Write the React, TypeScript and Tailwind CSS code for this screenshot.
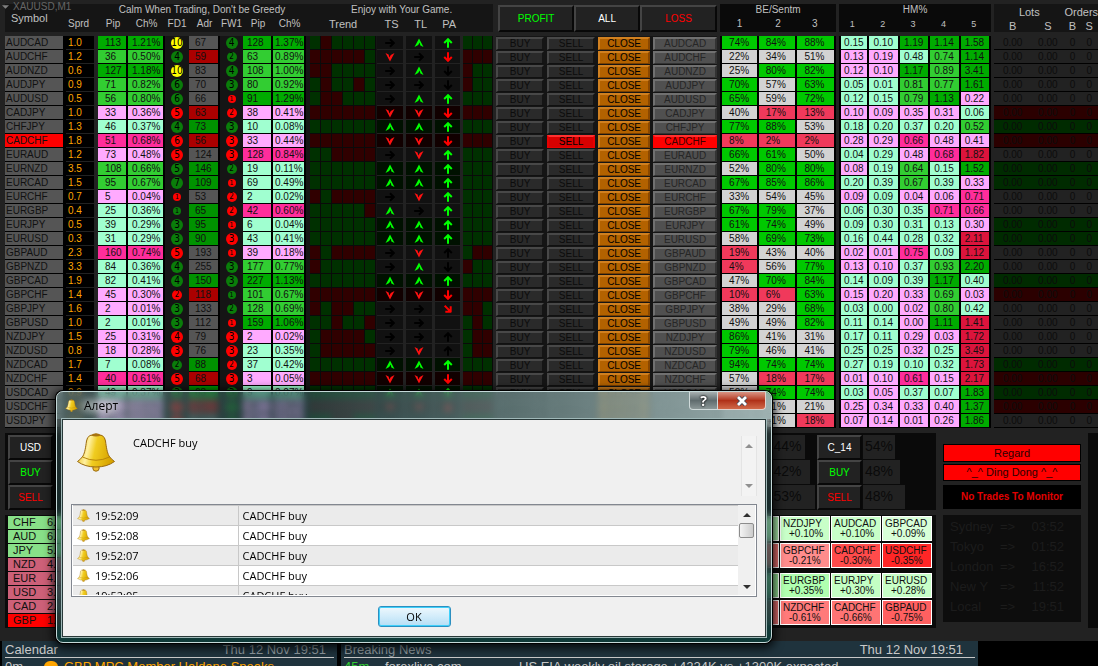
import React from "react";

type Tone = "a" | "b" | "c" | "p" | "h" | "r";

const tones: Record<string, string> = {
  a: "bg-[#00ab00]",
  b: "bg-[#32cd32]",
  c: "bg-[#a0ffd0]",
  p: "bg-[#ffaaff]",
  h: "bg-[#ff2d9b]",
  r: "bg-[#dc143c]",
};

const adrTones: Record<string, string> = {
  n: "bg-[#555555]",
  r: "bg-[#ab0000]",
  g: "bg-[#009300]",
};

const ballTones: Record<string, string> = {
  y: "bg-[#ffff00]",
  g: "bg-[#0a7d0a]",
  r: "bg-[#ff0000]",
};

// symbol | spread | pip ch tone | fd1 | adr | fw1 | pip ch tone | trend | ts tl pa | last three
const pairs = [
  "AUDCAD|1.0|113 1.21 a|10 y|67 n|4 g|128 1.37 a|GRGGGG|nuU|GGG",
  "AUDCHF|1.2|36 0.50 b|4 g|59 r|2 g|63 0.89 b|RRRRRG|dnD|RRR",
  "AUDNZD|0.6|127 1.18 a|10 y|83 n|4 g|108 1.00 b|RRGGGG|nux|RGG",
  "AUDJPY|0.9|71 0.82 b|6 g|70 n|3 g|80 0.92 b|GRGGRG|nnx|RGG",
  "AUDUSD|0.5|56 0.80 b|6 g|66 n|1 r|91 1.29 a|GRRGGG|nuU|GGG",
  "CADJPY|1.0|33 0.36 p|5 r|63 r|2 r|38 0.41 p|RRRRRR|ddD|RRR",
  "CHFJPY|1.3|46 0.37 c|4 g|73 g|3 g|10 0.08 c|GGGGGG|uuU|GGG",
  "CADCHF|1.8|51 0.68 h|6 r|56 r|3 r|33 0.44 p|RRRRRR|ddD|RRR",
  "EURAUD|1.2|73 0.48 p|5 r|124 n|3 r|128 0.84 h|GGRRRR|ndU|GGG",
  "EURNZD|3.5|108 0.66 b|5 g|146 g|2 g|19 0.11 c|GGGGGG|uuU|GGG",
  "EURCAD|1.5|95 0.67 b|7 g|109 g|1 r|69 0.49 c|GGGGGG|uuU|GGG",
  "EURCHF|0.7|5 0.04 p|1 r|53 n|2 r|2 0.02 c|RGRRRR|ndU|GGG",
  "EURGBP|0.4|25 0.36 c|1 g|65 g|2 r|42 0.60 h|GGGGGR|unU|GGG",
  "EURJPY|0.5|39 0.29 c|3 g|95 g|1 r|6 0.04 c|GGGGGG|uuU|GGG",
  "EURUSD|0.3|31 0.29 c|3 g|90 g|3 r|43 0.41 c|GGGGGG|uuU|GGG",
  "GBPAUD|2.3|160 0.74 h|5 r|193 n|1 r|39 0.18 p|RGRRRR|ndw|GRR",
  "GBPNZD|3.3|84 0.36 c|4 g|255 n|3 g|177 0.77 b|RGGGGG|nux|RGG",
  "GBPCAD|1.9|82 0.41 c|4 g|150 g|3 g|227 1.13 a|GGGGGG|uuU|GGG",
  "GBPCHF|1.4|45 0.30 p|2 r|118 r|1 g|101 0.67 b|RRRRRR|ddD|RRR",
  "GBPJPY|1.6|2 0.01 p|3 g|133 n|2 g|128 0.69 b|RGRRGG|nns|RRG",
  "GBPUSD|1.0|2 0.01 c|3 g|112 n|1 r|159 1.06 a|GGRGGR|nn-|GRG",
  "NZDJPY|1.5|25 0.31 p|4 r|79 n|3 r|2 0.02 p|GRRRRG|nnw|GRR",
  "NZDUSD|0.8|18 0.28 p|3 r|76 n|3 r|23 0.35 c|GRRRRR|ndw|GRR",
  "NZDCAD|1.7|7 0.08 c|2 g|88 g|2 r|37 0.42 c|GGGGGG|uuU|GGG",
  "NZDCHF|1.4|40 0.61 h|5 r|68 r|3 r|3 0.05 p|RRRRRR|ddD|RRR",
  "USDCAD|0.9|49 0.37 c|3 g|63 g|3 g|9 0.07 c|GGGGGG|uuU|GGG",
  "USDCHF|1.0|41 0.41 p|4 r|61 r|3 g|28 0.28 p|RRRRRR|ddD|RRR",
  "USDJPY|0.6|26 0.21 p|3 r|60 n|2 g|18 0.15 p|GGRRGG|nnw|GGG",
].map((line) => {
  const [symbol, spread, day, fd, adr, fw, week, trend, marks, last] = line.split("|");
  return {
    symbol,
    spread,
    day: day.split(" "),
    fd: fd.split(" "),
    adr: adr.split(" "),
    fw: fw.split(" "),
    week: week.split(" "),
    trend: trend.split(""),
    marks: marks.split(""),
    last: last.split(""),
  };
});

const sentiment = [
  [74, 84, 88], [22, 34, 51], [25, 80, 82], [70, 57, 63], [65, 59, 72], [40, 17, 13], [77, 88, 53],
  [8, 2, 2], [66, 61, 50], [52, 80, 80], [67, 85, 86], [33, 54, 45], [67, 79, 37], [61, 74, 49],
  [58, 69, 73], [19, 43, 40], [4, 56, 77], [47, 70, 84], [10, 6, 63], [38, 29, 68], [49, 49, 82],
  [86, 41, 31], [79, 46, 41], [94, 74, 74], [57, 18, 17], [52, 74, 74], [31, 31, 21], [41, 41, 18],
];

const heatmap = [
  "c0.15 c0.10 a1.19 a1.14 a1.58",
  "p0.13 p0.19 c0.48 b0.74 a1.14",
  "p0.12 p0.10 a1.17 b0.89 a3.41",
  "c0.05 c0.01 b0.81 b0.77 a1.61",
  "c0.12 c0.15 b0.79 a1.13 p0.22",
  "p0.10 p0.09 p0.35 p0.31 c0.06",
  "c0.18 c0.20 c0.37 c0.20 b0.52",
  "p0.28 p0.29 h0.66 p0.48 p0.41",
  "c0.04 c0.29 p0.48 h0.68 r1.82",
  "p0.08 c0.19 b0.64 c0.15 a1.52",
  "c0.20 c0.39 b0.67 c0.39 p0.33",
  "p0.09 c0.09 p0.04 p0.06 h0.71",
  "c0.06 c0.30 c0.35 h0.71 h0.66",
  "c0.09 c0.30 c0.31 c0.13 p0.30",
  "c0.16 c0.44 c0.28 c0.32 r2.11",
  "p0.02 p0.01 h0.75 c0.09 r1.12",
  "p0.13 p0.10 c0.37 b0.93 a2.20",
  "c0.14 c0.09 c0.39 a1.17 c0.40",
  "p0.15 p0.20 p0.33 b0.69 p0.03",
  "c0.03 c0.00 p0.02 b0.80 c0.42",
  "c0.11 c0.14 p0.00 a1.11 r1.41",
  "c0.17 c0.11 p0.29 p0.03 r1.72",
  "c0.25 c0.25 p0.32 c0.25 r3.49",
  "c0.27 c0.19 c0.10 c0.32 r1.73",
  "p0.01 p0.10 h0.61 p0.15 r2.17",
  "c0.03 p0.05 c0.37 c0.07 a1.83",
  "p0.25 p0.34 p0.33 p0.40 a1.37",
  "p0.07 p0.14 p0.01 p0.26 a1.86",
].map((line) => line.split(" "));

const strengths = [
  ["CHF", "6.", "bg-[#88e088]"],
  ["AUD", "6.", "bg-[#88e088]"],
  ["JPY", "5.", "bg-[#88e088]"],
  ["NZD", "4.", "bg-[#cd6078]"],
  ["EUR", "4.", "bg-[#cd6078]"],
  ["USD", "3.", "bg-[#cd6078]"],
  ["CAD", "2.", "bg-[#cd6078]"],
  ["GBP", "1.", "bg-[#ff0000]"],
];

const movers = [
  [
    ["", "", "bg-[#a8e8a8]"],
    ["NZDJPY", "+0.10%", "bg-[#c8ffc8]"],
    ["AUDCAD", "+0.10%", "bg-[#c8ffc8]"],
    ["GBPCAD", "+0.09%", "bg-[#d8ffd8]"],
    ["", "", "bg-[#e06c6c]"],
    ["GBPCHF", "-0.21%", "bg-[#ff8c8c]"],
    ["CADCHF", "-0.30%", "bg-[#ff4b4b]"],
    ["USDCHF", "-0.35%", "bg-[#ff2626]"],
  ],
  [
    ["", "", "bg-[#90d890]"],
    ["EURGBP", "+0.35%", "bg-[#b0ffb0]"],
    ["EURJPY", "+0.30%", "bg-[#c4ffc4]"],
    ["EURUSD", "+0.28%", "bg-[#c8ffc8]"],
    ["", "", "bg-[#e06c6c]"],
    ["NZDCHF", "-0.61%", "bg-[#ff7a7a]"],
    ["CADCHF", "-0.66%", "bg-[#ff7474]"],
    ["GBPAUD", "-0.75%", "bg-[#ff6060]"],
  ],
];

const clocks = [
  ["Sydney", "03:52"],
  ["Tokyo", "01:52"],
  ["London", "16:52"],
  ["New Y", "11:52"],
  ["Local", "19:51"],
];

const alerts = ["19:52:09", "19:52:08", "19:52:07", "19:52:06", "19:52:05"];

// rows where every signal agrees get a tinted background
const rowSignal = (marks: string[]) => {
  const key = marks.join("");
  return key === "uuU" ? "up" : key === "ddD" ? "down" : "flat";
};

const markTones = { up: "bg-[#001100]", down: "bg-[#110000]", flat: "bg-[#111111]" };
const lotTones = { up: "bg-[#002b00]", down: "bg-[#2b0000]", flat: "bg-[#222222]" };

const Mark = ({ kind }: { kind: string }) => {
  if (kind === "-") return null;
  if (kind === "u" || kind === "d") {
    return (
      <svg viewBox="0 0 10 10" className={kind === "u" ? "w-[10px] h-[10px] mx-auto text-[#00ff00]" : "w-[10px] h-[10px] mx-auto text-[#ff1111] rotate-180"}>
        <path d="M5 0.5 L9.5 9 L6.4 7.4 L5.6 4.6 L4.2 7 L0.5 9 Z" fill="currentColor" />
      </svg>
    );
  }
  const look: Record<string, string> = {
    n: "w-[10px] h-[10px] mx-auto text-black rotate-90",
    U: "w-[10px] h-[10px] mx-auto text-[#00ff00]",
    D: "w-[10px] h-[10px] mx-auto text-[#ff0000] rotate-180",
    x: "w-[10px] h-[10px] mx-auto text-black rotate-180",
    w: "w-[10px] h-[10px] mx-auto text-black",
    s: "w-[10px] h-[10px] mx-auto text-[#ff0000] rotate-135",
  };
  return (
    <svg viewBox="0 0 10 10" className={look[kind]}>
      <path d="M5 9.8 V1.2 M1.2 5 L5 1.2 L8.8 5" fill="none" stroke="currentColor" strokeWidth="2" />
    </svg>
  );
};

const Ball = ({ value, tone }: { value: string; tone: string }) => {
  const size =
    value === "1" ? "w-[8px] h-[8px] text-[7px]" : value === "2" ? "w-[10px] h-[10px] text-[8px]" : "w-[12px] h-[12px] text-[10px]";
  return (
    <span className={`flex items-center justify-center mx-auto rounded-full leading-none text-black font-['DejaVu_Sans_Condensed','DejaVu_Sans',sans-serif] ${size} ${ballTones[tone]}`}>
      {value}
    </span>
  );
};

const cell = "h-[14px] p-0 border-black border-b border-r-2 bg-clip-padding whitespace-nowrap";

const SymbolTable = () => (
  <table className="table-fixed w-[488px] shrink-0 border-separate border-spacing-0 bg-[#151515] leading-[12px] text-[10px]">
    <colgroup>
      <col className="w-[61px]" />
      <col className="w-[32px]" />
      <col className="w-[30px]" />
      <col className="w-[37px]" />
      <col className="w-[24px]" />
      <col className="w-[31px]" />
      <col className="w-[23px]" />
      <col className="w-[30px]" />
      <col className="w-[33px]" />
      <col className="w-[4px]" />
      <col span={6} className="w-[11px]" />
      <col className="w-[1px]" />
      <col className="w-[29px]" />
      <col className="w-[29px]" />
      <col className="w-[28px]" />
      <col span={3} className="w-[10px]" />
    </colgroup>
    <thead className="text-[#c0c0c0]">
      <tr className="h-3 whitespace-nowrap">
        <th rowSpan={2} className="p-0 pl-[6px] text-left text-[11px] font-normal">Symbol</th>
        <th className="p-0"></th>
        <th colSpan={7} className="p-0 font-normal">Calm When Trading, Don't be Greedy</th>
        <th className="p-0"></th>
        <th colSpan={13} className="p-0 font-normal">Enjoy with Your Game.</th>
      </tr>
      <tr className="h-4">
        <th className="p-0 pl-[2px] text-left font-normal">Sprd</th>
        <th className="p-0 font-normal">Pip</th>
        <th className="p-0 font-normal">Ch%</th>
        <th className="p-0 font-normal">FD1</th>
        <th className="p-0 font-normal">Adr</th>
        <th className="p-0 font-normal">FW1</th>
        <th className="p-0 font-normal">Pip</th>
        <th className="p-0 font-normal">Ch%</th>
        <th className="p-0"></th>
        <th colSpan={6} className="p-0 text-[11px] font-normal">Trend</th>
        <th className="p-0"></th>
        <th className="p-0 text-[11px] font-normal">TS</th>
        <th className="p-0 text-[11px] font-normal">TL</th>
        <th className="p-0 text-[11px] font-normal">PA</th>
        <th colSpan={3} className="p-0"></th>
      </tr>
      <tr>
        <th colSpan={23} className="h-1 p-0 bg-[#222222]"></th>
      </tr>
    </thead>
    <tbody className="text-[#111111]">
      {pairs.map((row) => (
        <tr key={row.symbol}>
          <td className={`h-[14px] p-0 pl-px border-black border-b border-r-3 bg-clip-padding ${row.symbol === "CADCHF" ? "bg-[#ff0000]" : "bg-[#555555]"}`}>
            {row.symbol}
          </td>
          <td className="h-[14px] p-0 pl-[2px] border-b border-r-4 border-[#222222] bg-black bg-clip-padding text-[#ffa500]">{row.spread}</td>
          <td className={`${cell} pl-[7px] ${tones[row.day[2] as Tone]}`}>{row.day[0]}</td>
          <td className={`${cell} pl-[4px] ${tones[row.day[2] as Tone]}`}>{row.day[1]}%</td>
          <td className="h-[14px] p-0"><Ball value={row.fd[0]} tone={row.fd[1]} /></td>
          <td className={`${cell} pl-[6px] ${adrTones[row.adr[1]]}`}>{row.adr[0]}</td>
          <td className="h-[14px] p-0"><Ball value={row.fw[0]} tone={row.fw[1]} /></td>
          <td className={`${cell} pl-[4px] ${tones[row.week[2] as Tone]}`}>{row.week[0]}</td>
          <td className={`${cell} pl-[2px] ${tones[row.week[2] as Tone]}`}>{row.week[1]}%</td>
          <td className="p-0"></td>
          {row.trend.map((t, i) => (
            <td key={i} className={`h-[14px] p-0 border-b border-r border-[#0a0a0a] ${t === "G" ? "bg-[#003000]" : "bg-[#300000]"}`}></td>
          ))}
          <td className="p-0"></td>
          {row.marks.map((m, i) => (
            <td key={i} className={`h-[14px] p-0 border-b border-r-3 border-[#222222] ${markTones[rowSignal(row.marks)]}`}>
              <Mark kind={m} />
            </td>
          ))}
          {row.last.map((t, i) => (
            <td key={i} className={`h-[14px] p-0 border-b border-r border-[#0a0a0a] ${t === "G" ? "bg-[#003000]" : "bg-[#300000]"}`}></td>
          ))}
        </tr>
      ))}
    </tbody>
  </table>
);

const headButton = "h-[27px] border-t-2 border-l-2 border-b-2 border-r-2 border-t-[#444444] border-l-[#444444] border-b-[#080808] border-r-[#080808] bg-[#222222] text-[10px]";
const rowButton = "h-[13px] border-t-2 border-l-2 border-b border-r-2 leading-[10px] text-[10px]";
const grayEdge = "border-t-[#484848] border-l-[#484848] border-b-[#111111] border-r-[#151515]";

const OrderPanel = () => (
  <div className="w-[221px] shrink-0 bg-[#151515]">
    <div className="grid grid-cols-[76px_66px_1fr] pt-px pl-[2px] pb-1 bg-[#222222]">
      <button className={`${headButton} text-[#00ff00]`}>PROFIT</button>
      <button className={`${headButton} text-white`}>ALL</button>
      <button className={`${headButton} text-[#ff0000]`}>LOSS</button>
    </div>
    <div className="grid grid-cols-[48px_48px_52px_1fr] gap-x-[3px] gap-y-px pt-px">
      {pairs.map(({ symbol }) => {
        const hot = symbol === "CADCHF";
        return (
          <React.Fragment key={symbol}>
            <button className={`${rowButton} ${grayEdge} bg-[#2a2a2a] text-[#0c0c0c]`}>BUY</button>
            <button className={`${rowButton} ${hot ? "border-[#e80000] border-t-[#ff3030] bg-[#d80000] text-black" : `${grayEdge} bg-[#2a2a2a] text-[#0c0c0c]`}`}>SELL</button>
            <button className={`${rowButton} border-t-[#d08020] border-l-[#d08020] border-b-[#7a4000] border-r-[#8a4800] bg-[#b36200] text-black`}>CLOSE</button>
            <button className={`${rowButton} ${hot ? "border-[#ff0000] border-t-[#ff3030] bg-[#ff0000] text-[#400000]" : "border-t-[#707070] border-l-[#707070] border-b-[#333333] border-r-[#333333] bg-[#505050] text-[#262626]"}`}>
              {symbol}
            </button>
          </React.Fragment>
        );
      })}
    </div>
  </div>
);

const sentimentTone = (v: number) => (v >= 60 ? "bg-[#00c800]" : v <= 20 ? "bg-[#f0395b]" : "bg-[#d3d3d3]");

const SentimentTable = () => (
  <table className="table-fixed w-[116px] shrink-0 border-separate border-spacing-0 bg-[#0a0a0a] leading-[12px] text-[10px]">
    <thead className="text-[#c0c0c0]">
      <tr className="h-3"><th colSpan={3} className="p-0 font-normal">BE/Sentm</th></tr>
      <tr className="h-4">
        <th className="p-0 font-normal">1</th>
        <th className="p-0 font-normal">2</th>
        <th className="p-0 pr-[4px] font-normal">3</th>
      </tr>
      <tr><th colSpan={3} className="h-1 p-0 bg-[#222222]"></th></tr>
    </thead>
    <tbody className="text-[#111111]">
      {sentiment.map((row, i) => (
        <tr key={i}>
          {row.map((v, j) => (
            <td key={j} className={`${cell} pl-[7px] first:border-l-2 ${sentimentTone(v)}`}>{v}%</td>
          ))}
        </tr>
      ))}
    </tbody>
  </table>
);

const HeatTable = () => (
  <table className="table-fixed w-[152px] shrink-0 border-separate border-spacing-0 bg-[#0a0a0a] leading-[12px] text-[10px]">
    <thead className="text-[#c0c0c0]">
      <tr className="h-3"><th colSpan={5} className="p-0 font-normal">HM%</th></tr>
      <tr className="h-4 text-[9px]">
        {[1, 2, 3, 4, 5].map((n) => (
          <th key={n} className="p-0 pr-1 font-normal">{n}</th>
        ))}
      </tr>
      <tr><th colSpan={5} className="h-1 p-0 bg-[#222222]"></th></tr>
    </thead>
    <tbody className="text-[#111111]">
      {heatmap.map((row, i) => (
        <tr key={i}>
          {row.map((v, j) => (
            <td key={j} className={`${cell} pl-[4px] first:pl-[3px] first:border-l-2 ${tones[v[0]]}`}>{v.slice(1)}</td>
          ))}
        </tr>
      ))}
    </tbody>
  </table>
);

const LotsTable = () => (
  <table className="table-fixed min-w-[104px] flex-1 border-separate border-spacing-0 bg-[#151515] leading-[12px] text-[10px]">
    <colgroup>
      <col className="w-[38px]" />
      <col className="w-[34px]" />
      <col className="w-[16px]" />
      <col />
    </colgroup>
    <thead className="text-[11px] text-[#c0c0c0]">
      <tr className="h-4 whitespace-nowrap">
        <th colSpan={2} className="p-0 font-normal">Lots</th>
        <th colSpan={2} className="p-0 font-normal">Orders</th>
      </tr>
      <tr className="h-3">
        <th className="p-0 font-normal">B</th>
        <th className="p-0 font-normal">S</th>
        <th className="p-0 font-normal">B</th>
        <th className="p-0 font-normal">S</th>
      </tr>
      <tr><th colSpan={4} className="h-1 p-0 bg-[#222222]"></th></tr>
    </thead>
    <tbody className="text-[#0c0c0c]">
      {pairs.map(({ symbol, marks }) => {
        const td = `h-[14px] p-0 border-b border-black text-center ${lotTones[rowSignal(marks)]}`;
        return (
          <tr key={symbol}>
            <td className={td}>0.00</td>
            <td className={td}>0.00</td>
            <td className={td}>0</td>
            <td className={td}>0</td>
          </tr>
        );
      })}
    </tbody>
  </table>
);

const sideButton = "h-[25px] w-[45px] border-2 border-t-[#444444] border-l-[#444444] border-b-[#080808] border-r-[#080808] bg-[#222222] text-[10px]";
const shareCell = "h-[24px] mb-px pt-px text-[14px] leading-[20px] bg-[#222222] text-[#0a0a0a] text-center";

const CurrencyPanel = () => (
  <div className="flex-1 min-w-0">
    <div className="flex justify-between h-[77px] pt-[2px] pl-[3px] bg-[#0a0a0a]">
      <div className="flex flex-col">
        <button className={`${sideButton} text-white`}>USD</button>
        <button className={`${sideButton} text-[#00ff00]`}>BUY</button>
        <button className={`${sideButton} text-[#ff0000]`}>SELL</button>
      </div>
      <div className="flex w-[166px]">
        <div className="w-[47px]">
          <div className={`${shareCell} w-[35px]`}>44%</div>
          <div className={`${shareCell} w-[40px] pr-[5px]`}>42%</div>
          <div className={`${shareCell} w-[45px] pr-[10px]`}>53%</div>
        </div>
        <div className="flex flex-col">
          <button className={`${sideButton} text-white`}>C_14</button>
          <button className={`${sideButton} text-[#00ff00]`}>BUY</button>
          <button className={`${sideButton} text-[#ff0000]`}>SELL</button>
        </div>
        <div className="pl-px">
          <div className={`${shareCell} w-[32px]`}>54%</div>
          <div className={`${shareCell} w-[37px] pr-[5px]`}>48%</div>
          <div className={`${shareCell} w-[42px] pr-[10px]`}>48%</div>
        </div>
      </div>
    </div>
    <div className="flex justify-between h-[113px] mt-[5px] pt-px pl-[3px] pr-[4px] bg-[#0a0a0a]">
      <div className="flex flex-col gap-px w-[100px] text-[11px] leading-[13px] text-[#111111]">
        {strengths.map(([name, value, tone]) => (
          <div key={name} className={`flex pl-[5px] ${tone}`}>
            <span className="w-[34px]">{name}</span>
            <span>{value}</span>
          </div>
        ))}
      </div>
      <div className="flex flex-col gap-[5px]">
        {movers.map((block, i) => (
          <div key={i} className="grid grid-cols-[50px_50px_50px_50px] gap-x-px gap-y-[2px]">
            {block.map(([name, value, tone], j) => (
              <div key={j} className={`h-[25px] pt-[2px] pl-[2px] border border-white text-[10px] leading-[10px] text-[#111111] ${tone}`}>
                <div>{name}</div>
                <div className="pl-[6px]">{value}</div>
              </div>
            ))}
          </div>
        ))}
      </div>
    </div>
  </div>
);

const MonitorPanel = () => (
  <div className="w-[150px] mt-[2px] ml-px px-[6px] pt-[9px] h-[191px] bg-[#222222] text-[11px] text-center">
    <div className="h-[18px] leading-[16px] border border-black bg-[#ff0000] text-[#2a0000]">Regard</div>
    <div className="h-[17px] mt-[2px] leading-[14px] border border-black bg-[#ff0000] text-[#2a0000]">^_^ Ding Dong ^_^</div>
    <div className="h-[24px] mt-[4px] leading-[24px] bg-black text-[10px] font-bold text-[#e00000]">No Trades To Monitor</div>
    <div className="h-[107px] mt-[6px] pt-[2px] pl-[7px] pr-[17px] bg-[#0d0d0d] text-[13px] leading-[20px] text-[#1c1c1c]">
      {clocks.map(([city, time]) => (
        <div key={city} className="flex text-left">
          <span className="w-[50px]">{city}</span>
          <span className="flex-1">=&gt;</span>
          <span>{time}</span>
        </div>
      ))}
    </div>
  </div>
);

const NewsBar = () => (
  <div className="grid grid-cols-[339px_637px_1fr] h-[50px] pl-[2px] bg-black text-[13px] text-[#c8c8c8] whitespace-nowrap">
    <div className="mr-[4px] px-[3px] bg-[#1f333d]">
      <div className="flex justify-between h-[17px] pr-[8px] leading-[17px] border-b border-[#c8c8c8]">
        <span>Calendar</span>
        <span className="text-[#909ba0]">Thu 12 Nov 19:51</span>
      </div>
      <div className="flex items-center h-[18px] text-[#ffa500]">
        <span className="w-[39px] text-[#c8c8c8]">0m</span>
        <span className="w-[14px] h-[12px] mr-[6px] rounded-full bg-[#ffa500]"></span>
        <span>GBP MPC Member Haldane Speaks</span>
      </div>
    </div>
    <div className="pl-[3px] pr-[3px] bg-[#1f333d]">
      <div className="flex justify-between h-[17px] pr-[12px] leading-[17px] border-b border-[#c8c8c8]">
        <span className="text-[#909ba0]">Breaking News</span>
        <span>Thu 12 Nov 19:51</span>
      </div>
      <div className="flex items-center h-[18px]">
        <span className="w-[41px] text-[#32cd32]">45m</span>
        <span className="w-[134px]">forexlive.com</span>
        <span>US EIA weekly oil storage +4224K vs +1300K expected</span>
      </div>
    </div>
  </div>
);

const Bell = ({ className }: { className: string }) => (
  <svg viewBox="0 0 40 40" className={className}>
    <defs>
      <linearGradient id="bell" x1="0" x2="1" y1="0" y2="0.2">
        <stop offset="0" stopColor="#e6b800" />
        <stop offset="0.35" stopColor="#fff0a0" />
        <stop offset="0.55" stopColor="#f0cc20" />
        <stop offset="1" stopColor="#d8a400" />
      </linearGradient>
    </defs>
    <circle cx="20" cy="36" r="3.2" fill="#f0c030" stroke="#9a6a10" />
    <path d="M14 3.5 Q20 1 26 3.5 Q29 5 29.5 9 C30.5 16 31 20 33 24 Q35 27 38.5 29.5 Q31 35 20 35 Q9 35 1.5 29.5 Q5 27 7 24 C9 20 9.5 16 10.5 9 Q11 5 14 3.5 Z" fill="url(#bell)" stroke="#9a6a10" />
    <path d="M15 3.6 Q20 -1 25 3.6 Q20 5.4 15 3.6 Z" fill="#a87410" />
    <path d="M6.5 25 Q20 31.5 33.5 25" fill="none" stroke="#b8860b" />
  </svg>
);

const Arrow = ({ down, color }: { down?: boolean; color: string }) => (
  <svg viewBox="0 0 8 4" className={down ? "w-[8px] h-[4px] rotate-180" : "w-[8px] h-[4px]"}>
    <path d="M4 0 L8 4 H0 Z" fill={color} />
  </svg>
);

const AlertDialog = () => (
  <div
    role="dialog"
    aria-labelledby="alert-title"
    className="absolute left-[56px] top-[391px] w-[716px] rounded-[7px] border border-[#c4d8d8] ring-1 ring-black shadow-[0_2px_10px_3px_rgba(0,0,0,0.8)] bg-linear-to-b from-[#506868]/40 via-[#204848]/50 to-[#0f3a38] backdrop-blur-[3px] px-[5px] pb-[5px] font-['Open_Sans','Noto_Sans',sans-serif] text-[11px] text-black"
  >
    <div className="flex items-start h-[27px] -mx-[5px] pl-[8px] pr-[5px] rounded-t-[6px] bg-linear-to-r from-[#88a8a8]/40 from-0% via-[#0c3c3c]/40 via-30% to-[#a0b4b4]/90">
      <div className="flex items-center h-[27px] flex-1">
        <Bell className="w-[13px] h-[13px] mr-[6px]" />
        <h1 id="alert-title" className="text-[12px] [text-shadow:0_0_8px_white,0_0_8px_white,0_0_12px_white]">Алерт</h1>
      </div>
      <button aria-label="Help" className="flex items-center justify-center w-[29px] h-[18px] rounded-bl-[4px] border border-t-0 border-[#d0dada] bg-linear-to-b from-[#a8b0b0] via-[#606c6e] to-[#8c9898] text-[14px] leading-none font-bold text-white [text-shadow:0_0_2px_black,0_0_2px_black]">
        ?
      </button>
      <button aria-label="Close" className="flex items-center justify-center w-[48px] h-[18px] rounded-br-[4px] border border-t-0 border-l-0 border-[#e0d0cc] bg-linear-to-b from-[#d89484] via-[#b03018] to-[#d06848]">
        <svg viewBox="0 0 12 10" className="w-[12px] h-[10px]">
          <path d="M2 1 L10 9 M10 1 L2 9" stroke="#404858" strokeWidth="4.4" />
          <path d="M2 1 L10 9 M10 1 L2 9" stroke="#ffffff" strokeWidth="2.8" />
        </svg>
      </button>
    </div>
    <div className="border border-[#283838] outline outline-[#a0b8b8] bg-[#f0f0f0] px-[8px] pt-[12px] pb-[9px]">
      <div className="flex h-[64px] pl-[5px]">
        <Bell className="w-[40px] h-[40px]" />
        <p className="flex-1 pl-[17px] pt-[3px] leading-[16px]">CADCHF buy</p>
        <div className="flex flex-col items-center justify-between w-[16px] h-[60px] mt-[4px] py-[8px] border-x border-[#e4e4e4] bg-[#f3f3f3]">
          <Arrow color="#909090" />
          <Arrow down color="#909090" />
        </div>
      </div>
      <div className="flex h-[93px] mt-[8px] px-px pb-px border border-[#828790] bg-white overflow-hidden">
        <div className="flex-1 overflow-hidden">
          <table className="w-full table-fixed border-collapse">
            <colgroup>
              <col className="w-[165px]" />
              <col />
            </colgroup>
            <tbody>
              {alerts.map((time) => (
                <tr key={time} className="h-[20px] border-y border-[#c8c8c8] odd:bg-[#ebebeb] bg-white">
                  <td className="p-0 border-r border-[#c8c8c8]">
                    <span className="flex items-center pl-[4px] leading-[18px]">
                      <Bell className="w-[13px] h-[13px] mr-[5px]" />
                      {time}
                    </span>
                  </td>
                  <td className="p-0 pl-[4px] leading-[18px]">CADCHF buy</td>
                </tr>
              ))}
            </tbody>
          </table>
        </div>
        <div className="flex flex-col items-center w-[17px] pt-[8px] pb-[6px] bg-[#f0f0f0]">
          <Arrow color="#303030" />
          <div className="w-[15px] h-[15px] mt-[6px] mb-auto rounded-[2px] border border-[#8c8c8c] bg-linear-to-r from-[#f4f4f4] to-[#cccccc]"></div>
          <Arrow down color="#303030" />
        </div>
      </div>
      <button className="block w-[73px] h-[21px] mx-auto mt-[9px] rounded-[3px] border border-[#2c8fc0] ring-1 ring-inset ring-[#3fd0fa] bg-linear-to-b from-[#eef8fd] via-[#d2ecfa] to-[#b4def5] leading-[17px]">
        OK
      </button>
    </div>
  </div>
);

const App = () => {
  return (
    <main className="relative w-full h-screen overflow-hidden bg-[#222222] font-['Liberation_Sans',Arial,sans-serif]">
      <div className="absolute left-[2px] top-[2px] flex items-center gap-[4px] text-[10px] leading-[10px] text-[#666666]">
        <svg viewBox="0 0 8 4" className="w-[7px] h-[4px]">
          <path d="M0 0 H8 L4 4 Z" fill="#808080" />
        </svg>
        XAUUSD,M1
      </div>
      <section className="flex gap-[3px] pt-1 pl-[5px] items-start">
        <SymbolTable />
        <OrderPanel />
        <SentimentTable />
        <HeatTable />
        <LotsTable />
      </section>
      <section className="flex mt-[5px] pl-[5px] mb-[13px]">
        <CurrencyPanel />
        <MonitorPanel />
        <div className="w-[10px] ml-px bg-[#0a0a0a]"></div>
      </section>
      <NewsBar />
      <AlertDialog />
    </main>
  );
};

export default App;
